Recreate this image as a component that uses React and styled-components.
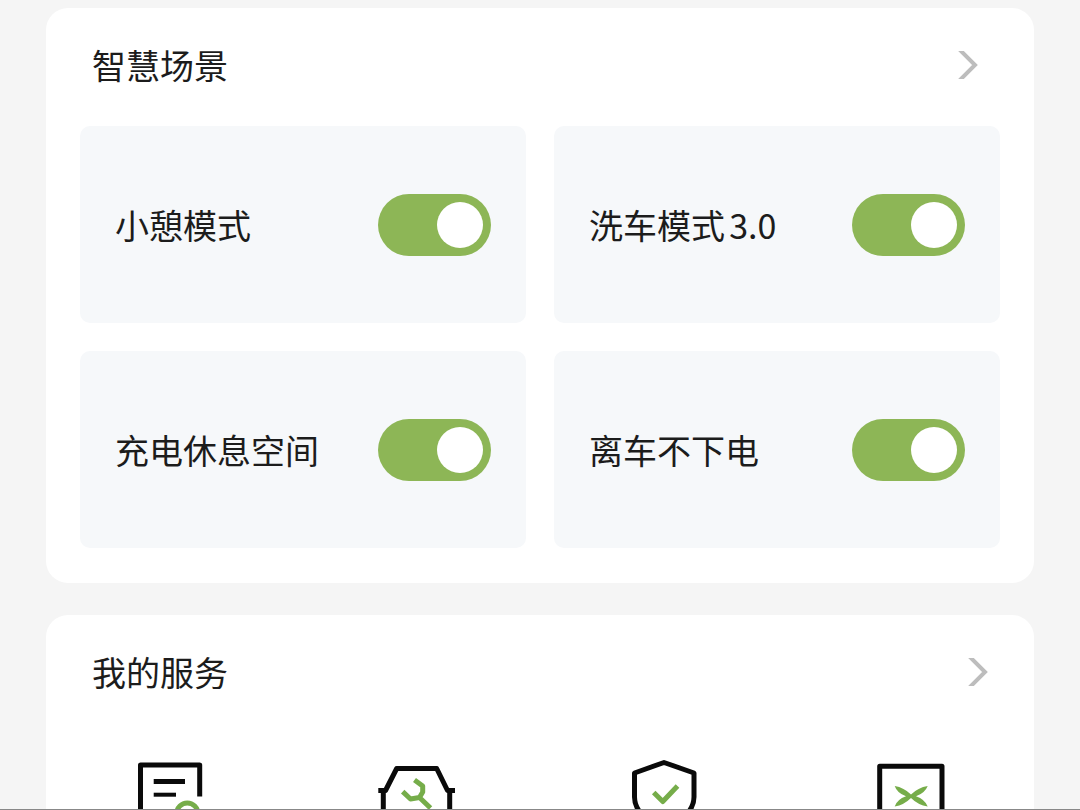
import React, { useState } from 'react'
import styled, { createGlobalStyle } from 'styled-components'

const GlobalStyle = createGlobalStyle`
  * {
    box-sizing: border-box;
  }

  body {
    margin: 0;
    background: #f5f5f5;
    color: #1c1c1c;
    font-family: "Noto Sans CJK SC", "Noto Sans", sans-serif;
    font-size: 34px;
    line-height: 48px;
    text-autospace: normal;
  }
`

const Page = styled.main`
  display: flex;
  flex-direction: column;
  gap: 32px;
  height: 100vh;
  padding: 8px 46px 0;
  overflow: hidden;
  border-bottom: 1px solid #888;
`

const Card = styled.section`
  flex-shrink: 0;
  background: #fff;
  border-radius: 22px;
`

const CardHeader = styled.header`
  display: flex;
  align-items: center;
  justify-content: space-between;
  padding: 33px ${props => props.$endSpace}px 37px 46px;
`

const Title = styled.h2`
  margin: 0;
  font-size: 34px;
  font-weight: 400;
`

const MoreButton = styled.button`
  display: flex;
  padding: 0;
  border: 0;
  background: none;
  cursor: pointer;
`

const SceneGrid = styled.div`
  display: grid;
  grid-template-columns: 1fr 1fr;
  gap: 28px;
  padding: 0 34px 35px;
`

const SceneTile = styled.label`
  display: flex;
  align-items: center;
  justify-content: space-between;
  min-height: 197px;
  padding: 0 35px;
  background: #f6f8fa;
  border-radius: 10px;
  cursor: pointer;
`

const Toggle = styled.input`
  appearance: none;
  display: flex;
  flex-shrink: 0;
  align-items: center;
  justify-content: flex-start;
  width: 113px;
  height: 62px;
  margin: 0;
  padding: 0 8px;
  border-radius: 31px;
  background: #d0d3d6;
  cursor: pointer;

  &::before {
    content: "";
    width: 46px;
    height: 46px;
    border-radius: 50%;
    background: #fff;
  }

  &:checked {
    justify-content: flex-end;
    background: #8db656;
  }
`

const ServiceGrid = styled.div`
  display: grid;
  grid-template-columns: repeat(4, 1fr);
  justify-items: center;
  padding: 20px 0 40px;
`

const ServiceButton = styled(MoreButton)`
  svg {
    fill: none;
    stroke: #0a0a0a;
    stroke-width: 5;
    stroke-linejoin: round;
  }

  .accent {
    stroke: #76ad4a;
  }

  .accent-fill {
    fill: #76ad4a;
    stroke: none;
  }
`

const Chevron = () => (
  <svg width="22" height="28" viewBox="0 0 22 28" fill="none" stroke="#bdbdbd" strokeWidth="4">
    <path d="M1 -2L17 14L1 30" />
  </svg>
)

const OrderIcon = () => (
  <svg width="81" height="81" viewBox="0 0 81 81">
    <path d="M70.700 43.500V12H11.500V72H44" />
    <path d="M24.700 28.500H56" />
    <path d="M24.700 41.700H47" strokeWidth="4" />
    <circle className="accent" cx="58.300" cy="60.400" r="10.500" />
  </svg>
)

const RepairIcon = () => (
  <svg width="81" height="81" viewBox="0 0 81 81">
    <path d="M2.300 37.500H9.500L20.700 15.500H60.700L71.500 37.500H79" />
    <path d="M7.300 38V72H73.700V38" />
    <path className="accent" d="M38.500 27L46.700 33V39L43.500 44.500L34.500 46L26.700 38.700M43.500 44.500L54.500 55" />
  </svg>
)

const ShieldIcon = () => (
  <svg width="81" height="81" viewBox="0 0 81 81">
    <path d="M41 9.500L71 20V44C71 57 61 67 41 75C21 67 11.500 57 11.500 44V20Z" />
    <path className="accent" d="M30.700 39.500L39.800 48.500L54.500 33" />
  </svg>
)

const MemberIcon = () => (
  <svg width="81" height="81" viewBox="0 0 81 81">
    <path d="M9.700 13.200H72V73H9.700Z" />
    <path
      className="accent-fill"
      d="M24.700 33Q34 34.500 41 41.500Q48 34.500 57.700 33Q55 40 46 43.300Q55 46.500 57.700 53.500Q48 52 41 45Q34 52 24.700 53.500Q27 46.500 36 43.300Q27 40 24.700 33Z"
    />
  </svg>
)

const scenes = ['小憩模式', '洗车模式3.0', '充电休息空间', '离车不下电']

const services = [
  { label: '订单', Icon: OrderIcon },
  { label: '维修', Icon: RepairIcon },
  { label: '保障', Icon: ShieldIcon },
  { label: '会员', Icon: MemberIcon },
]

const Scene = ({ name }) => {
  const [on, setOn] = useState(true)

  return (
    <SceneTile>
      <span>{name}</span>
      <Toggle type="checkbox" role="switch" checked={on} onChange={() => setOn(!on)} />
    </SceneTile>
  )
}

const App = () => {
  return (
    <>
      <GlobalStyle />
      <Page>
        <Card>
          <CardHeader $endSpace={54}>
            <Title>智慧场景</Title>
            <MoreButton aria-label="智慧场景"><Chevron /></MoreButton>
          </CardHeader>
          <SceneGrid>
            {scenes.map(name => <Scene key={name} name={name} />)}
          </SceneGrid>
        </Card>
        <Card>
          <CardHeader $endSpace={44}>
            <Title>我的服务</Title>
            <MoreButton aria-label="我的服务"><Chevron /></MoreButton>
          </CardHeader>
          <ServiceGrid>
            {services.map(({ label, Icon }) =>
              <ServiceButton key={label} aria-label={label}><Icon /></ServiceButton>
            )}
          </ServiceGrid>
        </Card>
      </Page>
    </>
  )
}

export default App
